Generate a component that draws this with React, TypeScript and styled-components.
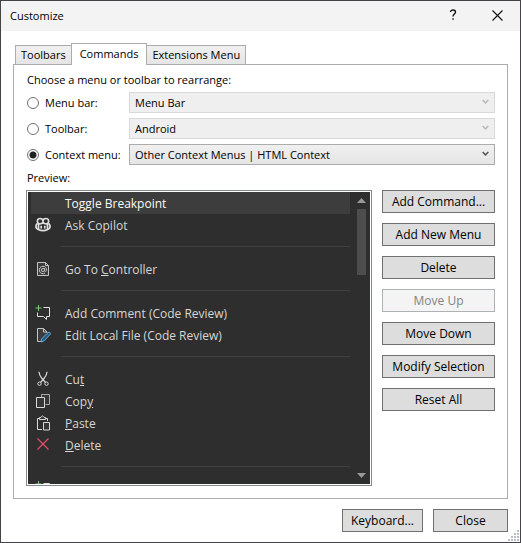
import React, { useState } from 'react';
import styled, { createGlobalStyle, css } from 'styled-components';

const GlobalStyle = createGlobalStyle`
  *, *::before, *::after { box-sizing: border-box; }
  html, body { margin: 0; height: 100%; }
  body, button, select, input {
    font-family: "Open Sans", "Noto Sans", sans-serif;
    font-size: 11px;
    line-height: 16px;
    color: #000;
  }
`;

const Dialog = styled.div`
  position: relative;
  display: flex;
  flex-direction: column;
  height: 100vh;
  min-height: 440px;
  border: 1px solid #454347;
  background: #fff;
`;

const TitleBar = styled.header`
  display: flex;
  align-items: center;
  height: 30px;
  padding: 0 0 0 9px;
  background: #f3f3f3;
`;

const Title = styled.h1`
  flex: 1;
  margin: 0;
  font-size: 11px;
  font-weight: 400;
`;

const CaptionButton = styled.button`
  display: flex;
  align-items: center;
  justify-content: center;
  width: 45px;
  height: 30px;
  padding: 0 0 2px;
  border: 0;
  background: transparent;
`;

const Body = styled.main`
  flex: 1;
  min-height: 0;
  display: flex;
  flex-direction: column;
  padding: 12px 12px 10px;
`;

const TabList = styled.div`
  display: flex;
  align-items: flex-end;
  padding-left: 2px;
`;

const Tab = styled.button<{ $active?: boolean }>`
  height: 20px;
  padding: 0 5px;
  margin-bottom: -1px;
  border: 1px solid #acacac;
  background: linear-gradient(#f0f0f0, #e5e5e5);
  line-height: 18px;
  white-space: nowrap;
  & + & { margin-left: -1px; }
  ${p => p.$active && css`
    && { z-index: 1; }
    height: 22px;
    padding: 0 8px 1px;
    border-bottom: 0;
    background: #fff;
  `}
`;

const Panel = styled.section`
  flex: 1;
  min-height: 0;
  display: flex;
  flex-direction: column;
  padding: 7px 12px 12px;
  border: 1px solid #acacac;
`;

const Caption = styled.div`
  margin-bottom: 4px;
  padding-left: 1px;
`;

const Choices = styled.div`
  display: grid;
  grid-template-columns: 103px 1fr;
  row-gap: 5px;
  margin-bottom: 5px;
`;

const RadioLabel = styled.label`
  display: flex;
  align-items: center;
  gap: 6px;
  height: 21px;
  padding-left: 1px;
  white-space: nowrap;
`;

const Radio = styled.input`
  appearance: none;
  flex: none;
  width: 12px;
  height: 12px;
  margin: 0;
  border: 1px solid #707070;
  border-radius: 50%;
  background: #fff;
  &:checked { background: radial-gradient(circle, #212121 0 3px, #fff 4px); }
`;

const SelectBox = styled.div`
  display: grid;
  align-items: center;
  > * { grid-area: 1 / 1; }
  > svg { justify-self: end; margin: 0 6px 2px 0; pointer-events: none; }
`;

const Select = styled.select`
  appearance: none;
  width: 100%;
  height: 21px;
  padding: 0 20px 0 5px;
  border: 1px solid #acacac;
  border-radius: 0;
  background: linear-gradient(#f0f0f0, #e5e5e5);
  &:disabled {
    opacity: 1;
    color: #000;
    border-color: #d9d9d9;
    background: #efefef;
  }
`;

const Columns = styled.div`
  flex: 1;
  min-height: 0;
  display: flex;
  gap: 10px;
`;

const Preview = styled.div`
  flex: 1;
  min-width: 0;
  display: flex;
  padding: 1px;
  border: 1px solid #828790;
`;

const MenuList = styled.div`
  flex: 1;
  min-width: 0;
  overflow: hidden;
  padding-left: 3px;
  background: #2e2e2e;
`;

const MenuRow = styled.button<{ $selected?: boolean }>`
  display: grid;
  grid-template-columns: 34px 1fr;
  align-items: center;
  width: 100%;
  height: 22px;
  padding: 0;
  border: 0;
  font-size: 12px;
  text-align: left;
  white-space: nowrap;
  color: ${p => (p.$selected ? '#fafafa' : '#d6d6d6')};
  background: ${p => (p.$selected ? '#3d3d3d' : 'transparent')};
  > svg { margin-left: 4px; }
  > span { grid-column: 2; padding-top: 1px; }
`;

const Separator = styled.hr`
  height: 1px;
  margin: 10px 0 11px 30px;
  border: 0;
  background: #404040;
`;

const ScrollBar = styled.div`
  flex: none;
  display: flex;
  flex-direction: column;
  width: 20px;
  padding: 6px 4px 6px 7px;
  background: #2e2e2e;
`;

const ScrollTrack = styled.div`
  flex: 1;
  padding: 6px 0;
`;

const ScrollThumb = styled.div`
  width: 9px;
  height: 66px;
  background: #4d4d4d;
`;

const Actions = styled.div`
  display: flex;
  flex-direction: column;
  gap: 10px;
  width: 113px;
`;

const PushButton = styled.button<{ $width?: number }>`
  width: ${p => (p.$width ? `${p.$width}px` : '100%')};
  height: 23px;
  padding: 0;
  border: 1px solid #707070;
  background: #ddd;
  font-size: 12px;
  white-space: nowrap;
  &:disabled {
    color: #838383;
    border-color: #adb2b5;
    background: #f4f4f4;
  }
`;

const Footer = styled.footer`
  display: flex;
  justify-content: flex-end;
  gap: 10px;
  padding-top: 10px;
`;

const Grip = styled.svg`
  position: absolute;
  right: 1px;
  bottom: 1px;
`;

const Chevron = ({ color }: { color: string }) => (
  <svg width="7" height="6" viewBox="0 0 7 6" fill="none" stroke={color} strokeWidth="1.5">
    <path d="M.7 1 3.5 4 6.3 1" />
  </svg>
);

type IconName = 'copilot' | 'controller' | 'comment' | 'edit' | 'cut' | 'copy' | 'paste' | 'delete';

const drawings: Record<IconName, React.ReactNode> = {
  copilot: (
    <g stroke="#e0e0e0" strokeWidth="1.7">
      <path d="M3 6.500C1.700 3.500 2.500 1.500 5 1.500c2.200 0 3 .8 3 2.800 0-2 .8-2.800 3-2.800 2.500 0 3.300 2 2 5" />
      <path d="M3 6C4 7.400 7.700 7.200 8 4.300 8.300 7.200 12 7.400 13 6" />
      <path d="M2.500 6.500C1.400 7.300 1 8 1 9v1.600C2.500 12.700 5 13.700 8 13.700s5.500-1 7-3.100V9c0-1-.4-1.700-1.500-2.500" />
      <path d="M3.500 7v5M12.500 7v5M6.200 8.800v2.700M9.800 8.800v2.700" />
    </g>
  ),
  controller: (
    <g stroke="#c4c4c4">
      <path d="M2.500 1.500h8l3 3v10h-11zM10.500 1.500v3h3" fill="#3c3c3c" />
      <circle cx="8" cy="9" r="1.600" />
      <path d="M9.600 7.200v2.300c0 1.500 2 1.200 2-.6C11.600 6.800 10 5.300 8 5.300a3.700 3.700 0 1 0 2 6.800" />
    </g>
  ),
  comment: (
    <g>
      <path d="M8.500 2.500h6v9h-3v3l-3-3h-6v-4" stroke="#e0e0e0" />
      <path d="M3.500 0v6M.5 3h6" stroke="#80c67a" />
    </g>
  ),
  edit: (
    <g>
      <path d="M6 14.500H2.500v-13h6l3.500 3.500v1" stroke="#c4c4c4" fill="#3c3c3c" />
      <path d="M8.500 1.500v3.500H12" stroke="#c4c4c4" />
      <path d="M6 15l.8-3.300 6.400-6.200c1.500-.8 2.700.6 2 1.900L8.900 14z" stroke="#60aee4" fill="#285779" />
    </g>
  ),
  cut: (
    <g stroke="#d8d8d8">
      <path d="M4 .8c0 2.500 1.300 4.700 3 6.700l3.500 4M12 .8c0 2.500-1.300 4.700-3 6.700l-3.500 4" strokeWidth="1.200" />
      <circle cx="4.500" cy="12.700" r="1.700" />
      <circle cx="11.500" cy="12.700" r="1.700" />
    </g>
  ),
  copy: (
    <g stroke="#d8d8d8">
      <path d="M6.500 4V1.500h8v10H10.500" fill="#353535" stroke="#a8a8a8" />
      <path d="M1.500 4.500h8v10h-8z" fill="#353535" />
    </g>
  ),
  paste: (
    <g stroke="#d8d8d8">
      <path d="M7 14.500H2.500v-11h2M10.500 3.500h2V6" />
      <path d="M4.500 4.500v-2h1.500c.3-2 2.700-2 3 0h1.500v2z" />
      <path d="M8.500 7.500h6v7.500h-6z" fill="#353535" />
    </g>
  ),
  delete: <path d="M2.500 1.500l11 11M13.500 1.500l-11 11" stroke="#df5068" strokeWidth="1.200" />,
};

const MenuIcon = ({ name }: { name: IconName }) => (
  <svg width="16" height="16" viewBox="0 0 16 16" fill="none" aria-hidden="true">
    {drawings[name]}
  </svg>
);

interface Entry {
  label: React.ReactNode;
  icon?: IconName;
}

const entries: (Entry | null)[] = [
  { label: 'Toggle Breakpoint' },
  { label: 'Ask Copilot', icon: 'copilot' },
  null,
  { label: <>Go To <u>C</u>ontroller</>, icon: 'controller' },
  null,
  { label: 'Add Comment (Code Review)', icon: 'comment' },
  { label: 'Edit Local File (Code Review)', icon: 'edit' },
  null,
  { label: <>Cu<u>t</u></>, icon: 'cut' },
  { label: <>Cop<u>y</u></>, icon: 'copy' },
  { label: <><u>P</u>aste</>, icon: 'paste' },
  { label: <><u>D</u>elete</>, icon: 'delete' },
  null,
  { label: '', icon: 'comment' },
];

const targets = [
  { id: 'menubar', label: 'Menu bar:', value: 'Menu Bar' },
  { id: 'toolbar', label: 'Toolbar:', value: 'Android' },
  { id: 'context', label: 'Context menu:', value: 'Other Context Menus | HTML Context' },
];

const actions = ['Add Command...', 'Add New Menu', 'Delete', 'Move Up', 'Move Down', 'Modify Selection', 'Reset All'];

const gripDots = [[9, 0], [6, 3], [9, 3], [3, 6], [6, 6], [9, 6], [0, 9], [3, 9], [6, 9], [9, 9]];

export default function App() {
  const [target, setTarget] = useState('context');
  const [selected, setSelected] = useState(0);

  return (
    <>
      <GlobalStyle />
      <Dialog role="dialog" aria-labelledby="dialog-title">
        <TitleBar>
          <Title id="dialog-title">Customize</Title>
          <CaptionButton aria-label="Help">
            <svg width="8" height="12" viewBox="0 0 8 12" fill="none" stroke="#111" strokeWidth="1.400">
              <path d="M1.500 3C1.500.3 6.500.3 6.500 3c0 2-2.500 2-2.500 4.500" />
              <path d="M4 9.300v1.500" />
            </svg>
          </CaptionButton>
          <CaptionButton aria-label="Close window">
            <svg width="11" height="11" viewBox="0 0 11 11" stroke="#111" strokeWidth="1.100">
              <path d="M.5.5l10 10M10.500.5l-10 10" />
            </svg>
          </CaptionButton>
        </TitleBar>
        <Body>
          <TabList role="tablist">
            <Tab role="tab">Toolbars</Tab>
            <Tab role="tab" aria-selected="true" $active>Commands</Tab>
            <Tab role="tab">Extensions Menu</Tab>
          </TabList>
          <Panel role="tabpanel">
            <Caption>Choose a menu or toolbar to rearrange:</Caption>
            <Choices>
              {targets.map(t => (
                <React.Fragment key={t.id}>
                  <RadioLabel>
                    <Radio type="radio" name="target" checked={target === t.id} onChange={() => setTarget(t.id)} />
                    {t.label}
                  </RadioLabel>
                  <SelectBox>
                    <Select aria-label={t.label} disabled={target !== t.id}>
                      <option>{t.value}</option>
                    </Select>
                    <Chevron color={target === t.id ? '#505050' : '#b8b8b8'} />
                  </SelectBox>
                </React.Fragment>
              ))}
            </Choices>
            <Caption>Preview:</Caption>
            <Columns>
              <Preview>
                <MenuList>
                  {entries.map((e, i) =>
                    e ? (
                      <MenuRow key={i} $selected={selected === i} onClick={() => setSelected(i)}>
                        {e.icon && <MenuIcon name={e.icon} />}
                        <span>{e.label}</span>
                      </MenuRow>
                    ) : (
                      <Separator key={i} />
                    ),
                  )}
                </MenuList>
                <ScrollBar aria-hidden="true">
                  <svg width="9" height="5" fill="#999"><path d="M0 5 4.500 0 9 5z" /></svg>
                  <ScrollTrack><ScrollThumb /></ScrollTrack>
                  <svg width="9" height="5" fill="#999"><path d="M0 0 4.500 5 9 0z" /></svg>
                </ScrollBar>
              </Preview>
              <Actions>
                {actions.map(a => (
                  <PushButton key={a} disabled={a === 'Move Up'}>{a}</PushButton>
                ))}
              </Actions>
            </Columns>
          </Panel>
          <Footer>
            <PushButton $width={81}>Keyboard...</PushButton>
            <PushButton $width={75}>Close</PushButton>
          </Footer>
        </Body>
        <Grip width="11" height="11" fill="#b9bdc4" aria-hidden="true">
          {gripDots.map(([x, y]) => <rect key={`${x}-${y}`} x={x} y={y} width="2" height="2" />)}
        </Grip>
      </Dialog>
    </>
  );
}
